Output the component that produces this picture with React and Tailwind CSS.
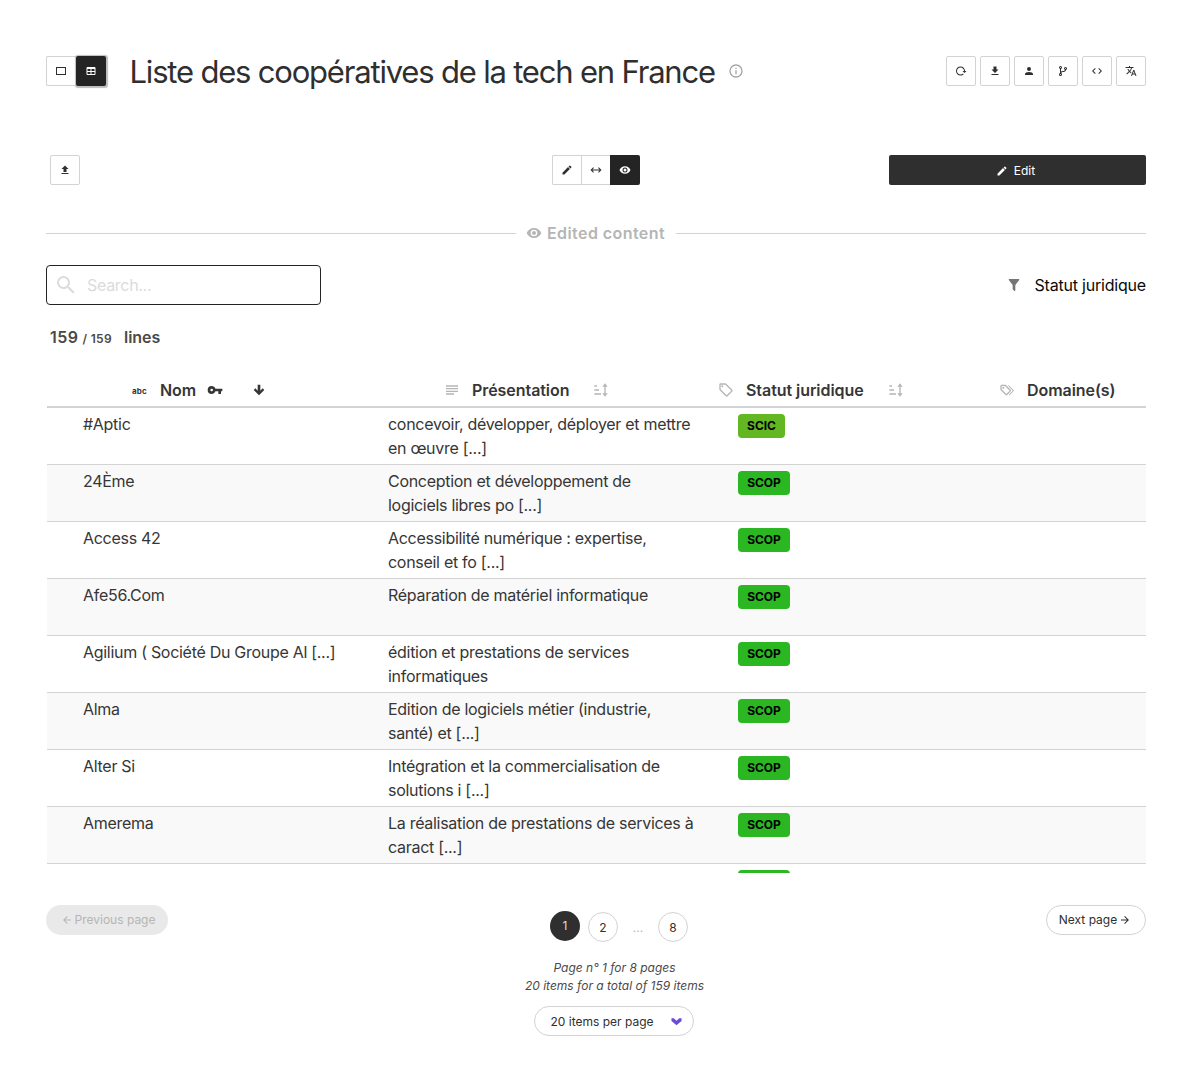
const P = {
  card: "M2,4H22V20H2V4M4,6V18H20V6H4Z",
  table: "M5,4H19A2,2 0 0,1 21,6V18A2,2 0 0,1 19,20H5A2,2 0 0,1 3,18V6A2,2 0 0,1 5,4M5,8V12H11V8H5M13,8V12H19V8H13M5,14V18H11V14H5M13,14V18H19V14H13Z",
  reload: "M2 12C2 16.97 6.03 21 11 21C13.39 21 15.68 20.06 17.4 18.4L15.9 16.9C14.63 18.25 12.86 19 11 19C4.76 19 1.64 11.46 6.05 7.05C10.46 2.64 18 5.77 18 12H15L19 16H19.1L23 12H20C20 7.03 15.97 3 11 3C6.03 3 2 7.03 2 12Z",
  download: "M5,20H19V18H5M19,9H15V3H9V9H5L12,16L19,9Z",
  account: "M12,4A4,4 0 0,1 16,8A4,4 0 0,1 12,12A4,4 0 0,1 8,8A4,4 0 0,1 12,4M12,14C16.42,14 20,15.79 20,18V20H4V18C4,15.79 7.58,14 12,14Z",
  branch: "M13,14C9.64,14 8.54,15.35 8.18,16.24C9.25,16.7 10,17.76 10,19A3,3 0 0,1 7,22A3,3 0 0,1 4,19C4,17.69 4.83,16.58 6,16.17V7.83C4.83,7.42 4,6.31 4,5A3,3 0 0,1 7,2A3,3 0 0,1 10,5C10,6.31 9.17,7.42 8,7.83V13.12C8.88,12.47 10.16,12 12,12C14.67,12 15.56,10.66 15.85,9.77C14.77,9.32 14,8.25 14,7A3,3 0 0,1 17,4A3,3 0 0,1 20,7C20,8.34 19.12,9.5 17.91,9.86C17.65,11.29 16.68,14 13,14M7,18A1,1 0 0,0 6,19A1,1 0 0,0 7,20A1,1 0 0,0 8,19A1,1 0 0,0 7,18M7,4A1,1 0 0,0 6,5A1,1 0 0,0 7,6A1,1 0 0,0 8,5A1,1 0 0,0 7,4M17,6A1,1 0 0,0 16,7A1,1 0 0,0 17,8A1,1 0 0,0 18,7A1,1 0 0,0 17,6Z",
  code: "M14.6,16.6L19.2,12L14.6,7.4L16,6L22,12L16,18L14.6,16.6M9.4,16.6L4.8,12L9.4,7.4L8,6L2,12L8,18L9.4,16.6Z",
  translate: "M12.87,15.07L10.33,12.56L10.36,12.53C12.1,10.59 13.34,8.36 14.07,6H17V4H10V2H8V4H1V6H12.17C11.5,7.92 10.44,9.75 9,11.35C8.07,10.32 7.3,9.19 6.69,8H4.69C5.42,9.63 6.42,11.17 7.67,12.56L2.58,17.58L4,19L9,14L12.11,17.11L12.87,15.07M18.5,10H16.5L12,22H14L15.12,19H19.87L21,22H23L18.5,10M15.88,17L17.5,12.67L19.12,17H15.88Z",
  upload: "M9,16V10H5L12,3L19,10H15V16H9M5,20V18H19V20H5Z",
  pencil: "M20.71,7.04C21.1,6.65 21.1,6 20.71,5.63L18.37,3.29C18,2.9 17.35,2.9 16.96,3.29L15.12,5.12L18.87,8.87M3,17.25V21H6.75L17.81,9.93L14.06,6.18L3,17.25Z",
  leftRight: "M6.45,17.45L1,12L6.45,6.55L7.86,7.96L4.83,11H19.17L16.14,7.96L17.55,6.55L23,12L17.55,17.45L16.14,16.04L19.17,13H4.83L7.86,16.04L6.45,17.45Z",
  eye: "M12,9A3,3 0 0,0 9,12A3,3 0 0,0 12,15A3,3 0 0,0 15,12A3,3 0 0,0 12,9M12,17A5,5 0 0,1 7,12A5,5 0 0,1 12,7A5,5 0 0,1 17,12A5,5 0 0,1 12,17M12,4.5C7,4.5 2.73,7.61 1,12C2.73,16.39 7,19.5 12,19.5C17,19.5 21.27,16.39 23,12C21.27,7.61 17,4.5 12,4.5Z",
  info: "M11,9H13V7H11M12,20C7.59,20 4,16.41 4,12C4,7.59 7.59,4 12,4C16.41,4 20,7.59 20,12C20,16.41 16.41,20 12,20M12,2A10,10 0 0,0 2,12A10,10 0 0,0 12,22A10,10 0 0,0 22,12A10,10 0 0,0 12,2M11,17H13V11H11V17Z",
  filter: "M14,12V19.88C14.04,20.18 13.94,20.5 13.71,20.71C13.32,21.1 12.69,21.1 12.3,20.71L10.29,18.7C10.06,18.47 9.96,18.16 10,17.87V12H9.97L4.21,4.62C3.87,4.19 3.95,3.56 4.38,3.22C4.57,3.08 4.78,3 5,3H19C19.22,3 19.43,3.08 19.62,3.22C20.05,3.56 20.13,4.19 19.79,4.62L14.03,12H14Z",
  magnify: "M9.5,3A6.5,6.5 0 0,1 16,9.5C16,11.11 15.41,12.59 14.44,13.73L14.71,14H15.5L20.5,19L19,20.5L14,15.5V14.71L13.73,14.44C12.59,15.41 11.11,16 9.5,16A6.5,6.5 0 0,1 3,9.5A6.5,6.5 0 0,1 9.5,3M9.5,5C7,5 5,7 5,9.5C5,12 7,14 9.5,14C12,14 14,12 14,9.5C14,7 12,5 9.5,5Z",
  key: "M7,14A2,2 0 0,1 5,12A2,2 0 0,1 7,10A2,2 0 0,1 9,12A2,2 0 0,1 7,14M12.65,10C11.83,7.67 9.61,6 7,6A6,6 0 0,0 1,12A6,6 0 0,0 7,18C9.61,18 11.83,16.33 12.65,14H17V18H21V14H23V10H12.65Z",
  arrowDown: "M10,4H14V13L17.5,9.5L19.92,11.92L12,19.84L4.08,11.92L6.5,9.5L10,13V4Z",
  arrowLeft: "M20,11V13H8L13.5,18.5L12.08,19.92L4.16,12L12.08,4.08L13.5,5.5L8,11H20Z",
  arrowRight: "M4,11V13H16L10.5,18.5L11.92,19.92L19.84,12L11.92,4.08L10.5,5.5L16,11H4Z",
  text: "M3,5H21V7H3V5M3,9H21V11H3V9M3,13H21V15H3V13M3,17H15V19H3V17Z",
  tag: "M21.41 11.58L12.41 2.58A2 2 0 0 0 11 2H4A2 2 0 0 0 2 4V11A2 2 0 0 0 2.59 12.42L11.59 21.42A2 2 0 0 0 13 22A2 2 0 0 0 14.41 21.41L21.41 14.41A2 2 0 0 0 22 13A2 2 0 0 0 21.41 11.58M13 20L4 11V4H11L20 13M6.5 5A1.5 1.5 0 1 1 5 6.5A1.5 1.5 0 0 1 6.5 5Z",
  tags: "M6.5 10C7.3 10 8 9.3 8 8.5S7.3 7 6.5 7 5 7.7 5 8.5 5.7 10 6.5 10M9 6L16 13L11 18L4 11V6H9M9 4H4C2.9 4 2 4.9 2 6V11C2 11.6 2.2 12.1 2.6 12.4L9.6 19.4C9.9 19.8 10.4 20 11 20S12.1 19.8 12.4 19.4L17.4 14.4C17.8 14 18 13.5 18 13C18 12.4 17.8 11.9 17.4 11.6L10.4 4.6C10.1 4.2 9.6 4 9 4M13.5 5.7L14.5 4.7L21.4 11.6C21.8 12 22 12.5 22 13S21.8 14.1 21.4 14.4L16 19.8L15 18.8L20.7 13L13.5 5.7Z",
  sort: "M19,17H22L18,22L14,17H17V7H14L18,2L22,7H19M2,17H12V19H2M6,5V7H2V5M2,11H9V13H2V11Z",
  chevron: "M1,5H6L12,10.5L18,5H23V11L12,20L1,11Z",
};

function Icon({ name, className = "size-3" }) {
  return (
    <svg viewBox="0 0 24 24" fill="currentColor" className={`shrink-0 ${className}`}>
      <path d={P[name]} />
    </svg>
  );
}

const btnBase = "flex h-[30px] items-center justify-center border border-[#d3d3d3]";
const btn = `${btnBase} w-[30px]`;

const rows = [
  ["#Aptic", "concevoir, développer, déployer et mettre", "en œuvre [...]", "SCIC"],
  ["24Ème", "Conception et développement de", "logiciels libres po [...]", "SCOP"],
  ["Access 42", "Accessibilité numérique : expertise,", "conseil et fo [...]", "SCOP"],
  ["Afe56.Com", "Réparation de matériel informatique", "", "SCOP"],
  ["Agilium ( Société Du Groupe Al [...]", "édition et prestations de services", "informatiques", "SCOP"],
  ["Alma", "Edition de logiciels métier (industrie,", "santé) et [...]", "SCOP"],
  ["Alter Si", "Intégration et la commercialisation de", "solutions i [...]", "SCOP"],
  ["Amerema", "La réalisation de prestations de services à", "caract [...]", "SCOP"],
  ["", "", "", ""],
];

function Header() {
  return (
    <header className="flex h-[30px] items-center">
      <div className="flex">
        <button className={`${btnBase} w-[30px] rounded-l-[2px] border-r-0 pr-px`}><Icon name="card" /></button>
        <button className="flex size-[30px] items-center justify-center rounded-[2px] bg-[#242424] text-white shadow-[0.5px_0.5px_1px_1px_#bdbdbd]">
          <Icon name="table" />
        </button>
      </div>
      <h1 className="ml-[23.5px] whitespace-nowrap pt-px text-[31px] leading-9 tracking-[-1.19px]">Liste des coopératives de la tech en France</h1>
      <Icon name="info" className="ml-[13.5px] size-4 text-[#a3a3a3]" />
      <div className="ml-auto flex gap-1">
        {["reload", "download", "account", "branch", "code", "translate"].map((n) => (
          <button key={n} className={`${btn} rounded-[2px]`}><Icon name={n} /></button>
        ))}
      </div>
    </header>
  );
}

function Toolbar() {
  return (
    <div className="mt-[69px] grid h-[30px] grid-cols-[506px_337px_257px]">
      <button className={`${btn} ml-1 rounded-[2px]`}><Icon name="upload" /></button>
      <div className="flex">
        <button className={`${btnBase} w-[29px] rounded-l-[2px] border-r-0`}><Icon name="pencil" /></button>
        <button className={`${btnBase} w-[29px] border-r-0`}><Icon name="leftRight" /></button>
        <button className="flex size-[30px] items-center justify-center rounded-r-[2px] bg-[#242424] text-white"><Icon name="eye" /></button>
      </div>
      <button className="flex items-center justify-center gap-1.5 rounded-[2px] bg-[#2f2f2f] pr-1 pt-px text-xs text-white">
        <Icon name="pencil" />Edit
      </button>
    </div>
  );
}

const sortIcon = <Icon name="sort" className="size-4 text-[#b5b5b5]" />;

function Table() {
  return (
    <div className="ml-px h-[500px] overflow-hidden">
      <div className="grid h-[35px] grid-cols-[341px_330px_281px_1fr] items-center border-b-2 border-[#d3d3d3] text-base font-semibold tracking-[-0.06px] text-[#363636]">
        <div className="flex items-center pl-[85px]">
          <span className="w-[28px] pt-0.5 text-[8px] font-bold leading-none tracking-[0.2px]">abc</span>
          <span>Nom</span>
          <Icon name="key" className="ml-[11px] size-4" />
          <Icon name="arrowDown" className="ml-7 size-4" />
        </div>
        <div className="flex items-center pl-14">
          <Icon name="text" className="size-4 text-[#b5b5b5]" />
          <span className="ml-3 mr-6">Présentation</span>
          {sortIcon}
        </div>
        <div className="flex items-center">
          <Icon name="tag" className="size-4 text-[#b5b5b5]" />
          <span className="ml-3 mr-6">Statut juridique</span>
          {sortIcon}
        </div>
        <div className="flex items-center">
          <Icon name="tags" className="size-4 text-[#b5b5b5]" />
          <span className="ml-3">Domaine(s)</span>
        </div>
      </div>
      {rows.map(([name, a, b, tag], i) => (
        <div key={i} className="grid h-[57px] grid-cols-[305px_350px_1fr] whitespace-nowrap border-b border-[#d3d3d3] pl-9 pt-1 text-base leading-6 tracking-[-0.29px] text-[#363636] even:bg-white odd:bg-[#f9f9f9]">
          <div>{name}</div>
          <div>{a}<br />{b}</div>
          <div>
            <span className={`mt-0.5 flex h-6 items-center justify-center rounded text-xs font-bold tracking-[-0.05px] text-black ${tag === "SCIC" ? "w-[47px] bg-[#62b722]" : "w-[52px] bg-[#2ab722]"}`}>{tag}</span>
          </div>
        </div>
      ))}
    </div>
  );
}

function Pagination() {
  const page = "flex size-[30px] items-center justify-center rounded-full text-xs";
  return (
    <footer className="mt-8 grid grid-cols-[478px_181px_1fr] items-start text-xs">
      <button className="flex h-[30px] w-[122px] items-center justify-center rounded-full bg-[#e9e9e9] pl-0.5 text-[#b5b5b5]">
        <Icon name="arrowLeft" className="mr-0.5 size-3" />Previous page
      </button>
      <div className="flex flex-col items-center pt-1.5">
        <div className="ml-[9px] flex w-[138px] items-start">
          <button className={`${page} bg-[#2f2f2f] text-[#dcdcdc]`}>1</button>
          <button className={`${page} ml-2 mt-px border border-[#d3d3d3] pt-0.5`}>2</button>
          <span className="w-10 pt-[9px] text-center text-[#b5b5b5]">...</span>
          <button className={`${page} mt-px border border-[#d3d3d3] pt-0.5`}>8</button>
        </div>
        <p className="mt-[17px] whitespace-nowrap text-center italic leading-[18px] text-[#4a4a4a]">Page n° 1 for 8 pages<br />20 items for a total of 159 items</p>
        <button className="mr-0.5 mt-[11px] flex h-[30px] w-40 items-center justify-between rounded-full border border-[#d3d3d3] pl-4 pr-[11px]">
          <span className="pt-px">20 items per page</span><Icon name="chevron" className="size-[11px] text-[#6b4bd6]" />
        </button>
      </div>
      <button className="flex h-[30px] w-[100px] items-center justify-center gap-0.5 justify-self-end rounded-full border border-[#d3d3d3] pr-0.5">
        Next page<Icon name="arrowRight" />
      </button>
    </footer>
  );
}

export default function App() {
  return (
    <main className="h-[1084px] w-[1193px] overflow-hidden bg-white pl-[46px] pr-[47px] pt-14 font-['Inter',sans-serif] text-[#2f2f2f]">
      <Header />
      <Toolbar />
      <div className="mt-9 flex h-6 items-center gap-[11px] text-[#b5b5b5]">
        <div className="h-px w-[470px] bg-[#d3d3d3]" />
        <div className="flex w-[138px] items-center gap-[5px] whitespace-nowrap text-base font-semibold tracking-[0.42px]"><Icon name="eye" className="-ml-px size-4" />Edited content</div>
        <div className="h-px flex-1 bg-[#d3d3d3]" />
      </div>
      <div className="mt-5 flex h-10 items-center justify-between">
        <div className="flex h-10 w-[275px] items-center rounded border border-[#242424] pl-[7px] text-base tracking-[-0.3px] text-[#dbdbdb]">
          <Icon name="magnify" className="mr-[9px] size-6" />Search...
        </div>
        <div className="flex items-center gap-3 text-base tracking-[-0.2px] text-[#0a0a0a]">
          <Icon name="filter" className="size-4 text-[#757575]" />Statut juridique
        </div>
      </div>
      <div className="mb-6 ml-1 mt-5 flex h-6 items-baseline text-base font-semibold text-[#4a4a4a]">
        <span className="tracking-[0.5px]">159</span><span className="ml-1 mr-3 text-xs tracking-[0.3px]">/ 159</span>lines
      </div>
      <Table />
      <Pagination />
    </main>
  );
}
